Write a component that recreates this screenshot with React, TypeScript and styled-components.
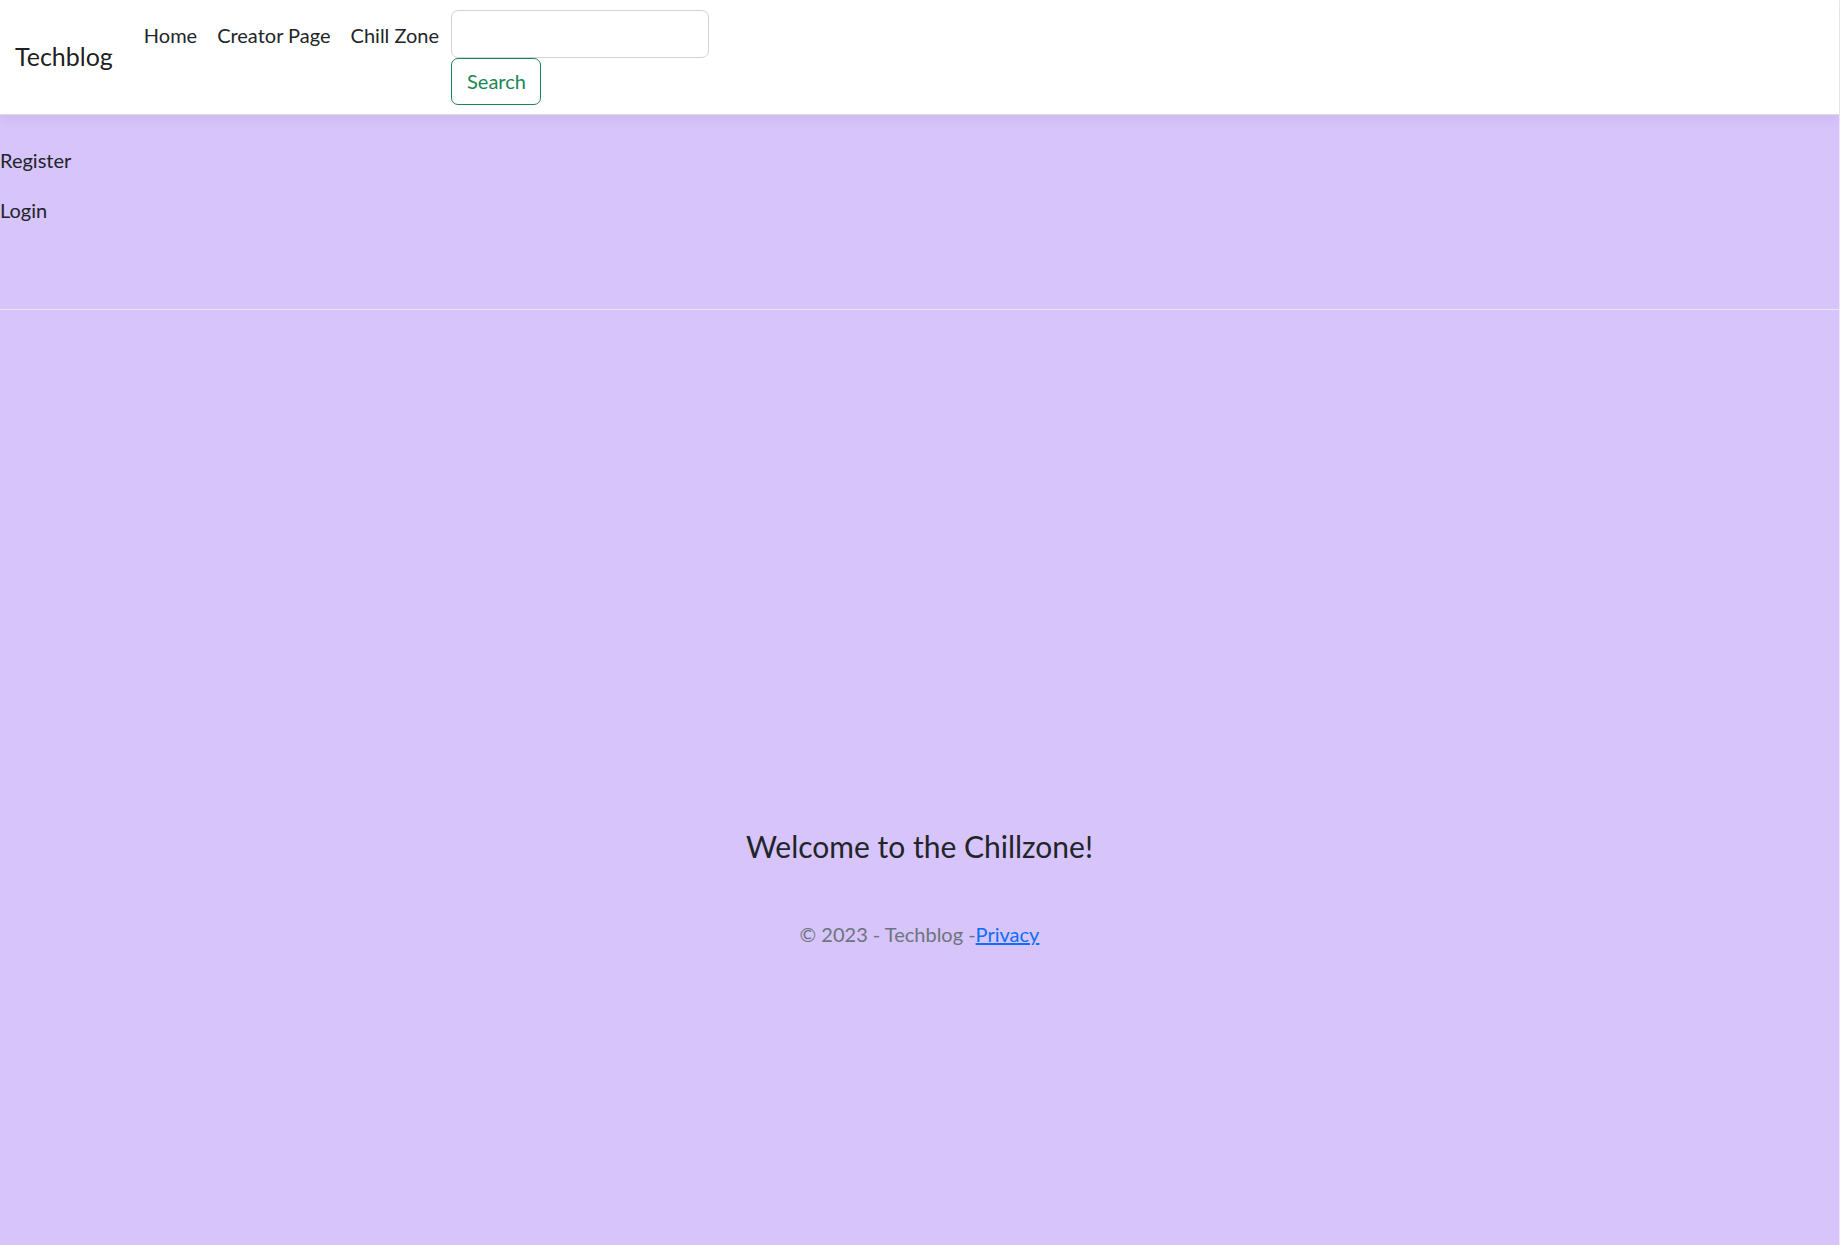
import React from "react";
import styled, { createGlobalStyle } from "styled-components";

const GlobalStyle = createGlobalStyle`
  html, body {
    margin: 0;
    padding: 0;
    height: 100%;
  }
  body {
    font-family: Lato, "Liberation Sans", sans-serif;
    font-size: 20px;
    line-height: 1.5;
    color: #212529;
    background: #d6c4fa;
  }
  #root {
    min-height: 100%;
  }
`;

const Page = styled.div`
  min-height: 1245px;
  background: #d6c4fa;
  border-right: 1px solid #ece6f6;
  box-sizing: border-box;
`;

const Navbar = styled.header`
  background: #ffffff;
  border-bottom: 1px solid #dcdcdc;
  box-shadow: 0 5px 12px rgba(60, 20, 120, 0.06);
  position: relative;
  z-index: 1;
`;

const NavContainer = styled.div`
  display: flex;
  align-items: center;
  padding: 10px 15px;
  height: 94px;
`;

const Brand = styled.a`
  font-size: 25px;
  line-height: 37.5px;
  padding: 6px 0;
  margin-right: 21px;
  color: rgba(0, 0, 0, 0.9);
  text-decoration: none;
`;

const NavList = styled.ul`
  display: flex;
  align-self: flex-start;
  list-style: none;
  margin: 0;
  padding: 0;
`;

const NavLink = styled.a`
  display: block;
  padding: 10px;
  font-size: 20px;
  line-height: 30px;
  color: #212529;
  text-decoration: none;
`;

const SearchForm = styled.form`
  display: flex;
  flex-direction: column;
  align-items: flex-start;
  align-self: flex-start;
  margin: 0 0 0 2px;
`;

const SearchInput = styled.input`
  box-sizing: border-box;
  width: 258px;
  height: 47.5px;
  border: 1.25px solid #ced4da;
  border-radius: 7px;
  background: #fff;
  font: inherit;
  padding: 7px 15px;
`;

const SearchButton = styled.button`
  box-sizing: border-box;
  height: 47px;
  padding: 0 15px;
  width: 90px;
  border: 1.25px solid #198754;
  border-radius: 7px;
  background: transparent;
  color: #198754;
  font-family: inherit;
  font-size: 20px;
  line-height: 30px;
  cursor: pointer;
`;

const Side = styled.div`
  padding-top: 30px;
  height: 194px;
  box-sizing: border-box;
`;

const SideItem = styled.p`
  margin: 0 0 20px;
  font-size: 20px;
  line-height: 30px;
  color: #212529;
`;

const Divider = styled.hr`
  margin: 0;
  border: 0;
  border-top: 1.5px solid #ebe3f7;
`;

const Main = styled.main`
  padding-top: 518px;
  text-align: center;
`;

const Welcome = styled.h4`
  margin: 0;
  font-size: 30px;
  font-weight: 400;
  line-height: 36px;
  color: #212529;
`;

const Footer = styled.footer`
  margin-top: 55px;
  font-size: 20px;
  line-height: 30px;
  color: #6c757d;
  text-align: center;
`;

const FooterLink = styled.a`
  color: #0d6efd;
  text-decoration: underline;
`;

export default function App() {
  return (
    <Page>
      <GlobalStyle />
      <Navbar>
        <NavContainer>
          <Brand href="#">Techblog</Brand>
          <NavList>
            <li><NavLink href="#">Home</NavLink></li>
            <li><NavLink href="#">Creator Page</NavLink></li>
            <li><NavLink href="#">Chill Zone</NavLink></li>
          </NavList>
          <SearchForm onSubmit={(e) => e.preventDefault()}>
            <SearchInput type="search" aria-label="Search" />
            <SearchButton type="submit">Search</SearchButton>
          </SearchForm>
        </NavContainer>
      </Navbar>
      <Side>
        <SideItem>Register</SideItem>
        <SideItem>Login</SideItem>
      </Side>
      <Divider />
      <Main>
        <Welcome>Welcome to the Chillzone!</Welcome>
        <Footer>
          © 2023 - Techblog -<FooterLink href="#">Privacy</FooterLink>
        </Footer>
      </Main>
    </Page>
  );
}
